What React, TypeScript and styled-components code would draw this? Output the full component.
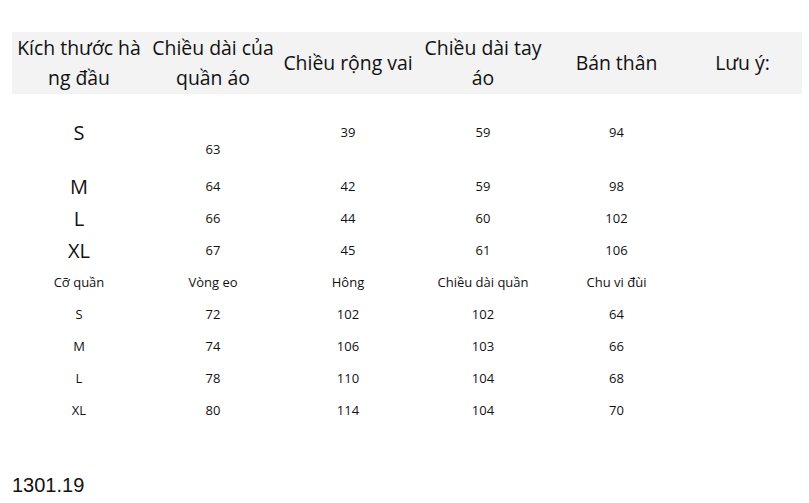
import React from 'react';
import styled, { createGlobalStyle } from 'styled-components';

const GlobalStyle = createGlobalStyle`
  html, body {
    margin: 0;
    padding: 0;
    background: #ffffff;
  }
  body {
    width: 809px;
    height: 503px;
    overflow: hidden;
    font-family: "Open Sans", "Noto Sans", sans-serif;
    color: #111111;
  }
`;

const Page = styled.div`
  display: flex;
  flex-direction: column;
  padding: 32px 7px 0 12px;
`;

const Table = styled.table`
  width: 790px;
  border-collapse: collapse;
  table-layout: fixed;
`;

const HeadRow = styled.tr`
  background-color: #f3f3f3;
  height: 62px;
`;

const Th = styled.th`
  font-weight: 400;
  font-size: 19.4px;
  line-height: 30px;
  text-align: center;
  vertical-align: middle;
  padding: 0;
  color: #111111;
`;

const Tr = styled.tr<{ $h: number }>`
  height: ${p => p.$h}px;
`;

const Td = styled.td<{ $big?: boolean; $drop?: number }>`
  font-size: ${p => (p.$big ? '20px' : '13px')};
  text-align: center;
  vertical-align: middle;
  padding: ${p => (p.$drop ? `${p.$drop}px 0 0` : '0')};
  color: #111111;
`;

const Footer = styled.div`
  margin-top: 48px;
  font-family: "Liberation Sans", Arial, sans-serif;
  font-size: 20px;
  color: #111111;
`;

const topSizes = [
  { size: 'M', vals: ['64', '42', '59', '98'] },
  { size: 'L', vals: ['66', '44', '60', '102'] },
  { size: 'XL', vals: ['67', '45', '61', '106'] },
];

const pants = [
  ['S', '72', '102', '102', '64'],
  ['M', '74', '106', '103', '66'],
  ['L', '78', '110', '104', '68'],
  ['XL', '80', '114', '104', '70'],
];

export default function App() {
  return (
    <>
      <GlobalStyle />
      <Page>
        <Table>
          <colgroup>
            <col style={{ width: 134 }} />
            <col style={{ width: 134 }} />
            <col style={{ width: 136 }} />
            <col style={{ width: 134 }} />
            <col style={{ width: 133 }} />
            <col style={{ width: 119 }} />
          </colgroup>
          <thead>
            <HeadRow>
              <Th>Kích thước hà ng đầu</Th>
              <Th>Chiều dài của quần áo</Th>
              <Th>Chiều rộng vai</Th>
              <Th>Chiều dài tay áo</Th>
              <Th>Bán thân</Th>
              <Th>Lưu ý:</Th>
            </HeadRow>
          </thead>
          <tbody>
            <Tr $h={76}>
              <Td $big>S</Td>
              <Td $drop={34}>63</Td>
              <Td>39</Td>
              <Td>59</Td>
              <Td>94</Td>
              <Td />
            </Tr>
            {topSizes.map(r => (
              <Tr $h={32} key={r.size}>
                <Td $big>{r.size}</Td>
                {r.vals.map((v, i) => (
                  <Td key={i}>{v}</Td>
                ))}
                <Td />
              </Tr>
            ))}
            <Tr $h={32}>
              <Td>Cỡ quần</Td>
              <Td>Vòng eo</Td>
              <Td>Hông</Td>
              <Td>Chiều dài quần</Td>
              <Td>Chu vi đùi</Td>
              <Td />
            </Tr>
            {pants.map(r => (
              <Tr $h={32} key={r[0]}>
                {r.map((v, i) => (
                  <Td key={i}>{v}</Td>
                ))}
                <Td />
              </Tr>
            ))}
          </tbody>
        </Table>
        <Footer>1301.19</Footer>
      </Page>
    </>
  );
}
